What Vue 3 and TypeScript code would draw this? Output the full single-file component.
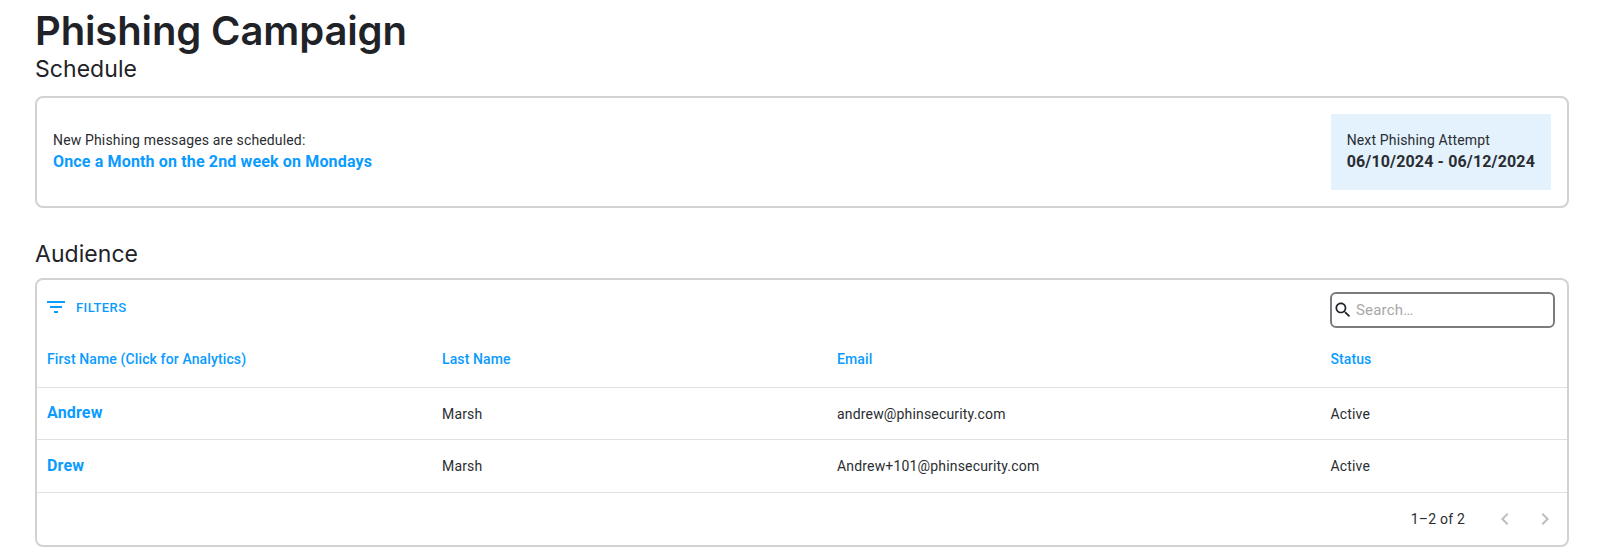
<script setup lang="ts">
interface Row { first: string; last: string; email: string; status: string }
const rows: Row[] = [
  { first: 'Andrew', last: 'Marsh', email: 'andrew@phinsecurity.com', status: 'Active' },
  { first: 'Drew', last: 'Marsh', email: 'Andrew+101@phinsecurity.com', status: 'Active' },
]
</script>

<template>
  <div class="page">
    <h1 class="title">Phishing Campaign</h1>
    <h2 class="subtitle">Schedule</h2>
    <section class="card schedule">
      <div class="lift">
        <div class="body">New Phishing messages are scheduled:</div>
        <div class="strong blue">Once a Month on the 2nd week on Mondays</div>
      </div>
      <div class="next">
        <div class="body">Next Phishing Attempt</div>
        <div class="strong">06/10/2024 - 06/12/2024</div>
      </div>
    </section>
    <h2 class="subtitle audience">Audience</h2>
    <section class="card grid">
      <div class="toolbar">
        <div class="filters">
          <svg width="18" height="18" viewBox="3 3 18 18" fill="#0a9bff"><path d="M10 18h4v-2h-4v2zM3 6v2h18V6H3zm3 7h12v-2H6v2z"/></svg>
          <span>FILTERS</span>
        </div>
        <div class="search">
          <svg width="20" height="20" viewBox="0 0 24 24" fill="#1f2328"><path d="M15.5 14h-.79l-.28-.27C15.41 12.59 16 11.11 16 9.5 16 5.91 13.09 3 9.5 3S3 5.91 3 9.5 5.91 16 9.5 16c1.61 0 3.09-.59 4.23-1.57l.27.28v.79l5 4.99L20.49 19l-4.99-5zm-6 0C7.01 14 5 11.99 5 9.5S7.01 5 9.5 5 14 7.01 14 9.5 11.99 14 9.5 14z"/></svg>
          <span>Search…</span>
        </div>
      </div>
      <div class="row head">
        <div>First Name (Click for Analytics)</div>
        <div>Last Name</div>
        <div>Email</div>
        <div>Status</div>
      </div>
      <div v-for="r in rows" :key="r.email" class="row data">
        <div class="name">{{ r.first }}</div>
        <div>{{ r.last }}</div>
        <div>{{ r.email }}</div>
        <div>{{ r.status }}</div>
      </div>
      <div class="footer">
        <span>1–2 of 2</span>
        <div class="pager">
          <svg width="24" height="24" viewBox="0 0 24 24" fill="#bdbdbd"><path d="M15.41 7.41 14 6l-6 6 6 6 1.41-1.41L10.83 12z"/></svg>
          <svg width="24" height="24" viewBox="0 0 24 24" fill="#bdbdbd"><path d="M10 6 8.59 7.41 13.17 12l-4.58 4.59L10 18l6-6z"/></svg>
        </div>
      </div>
    </section>
  </div>
</template>

<style>
html, body { background: #fff; margin: 0; }
</style>

<style scoped>
.page {
  padding: 7px 53px 0 35px;
  font-family: Roboto, "Liberation Sans", sans-serif;
  color: #2a2d31;
}
.title {
  margin: 0;
  font: 600 40px/48px Inter, sans-serif;
  letter-spacing: -0.13px;
  color: #1f2328;
}
.subtitle {
  margin: 0;
  font: 400 23px/28px Inter, sans-serif;
  letter-spacing: 0.05px;
  color: #1f2328;
}
.card {
  box-sizing: border-box;
  border: 2px solid #d2d2d2;
  border-radius: 8px;
  background: #fff;
}
.schedule {
  margin-top: 13px;
  height: 112px;
  display: flex;
  align-items: center;
  justify-content: space-between;
  padding: 0 16px;
}
.lift { padding-bottom: 2px; }
.body { font-size: 14px; line-height: 21px; letter-spacing: 0.15px; }
.strong { font-size: 16px; font-weight: 700; line-height: 22px; letter-spacing: 0.15px; }
.blue { color: #0a9bff; }
.next {
  background: #e3f2fd;
  padding: 0 16px 2px;
  height: 76px;
  box-sizing: border-box;
  display: flex;
  flex-direction: column;
  justify-content: center;
}
.audience { margin-top: 32px; margin-bottom: 10px; }
.grid { height: 269px; display: flex; flex-direction: column; font-size: 14px; }
.toolbar {
  height: 60px;
  display: flex;
  align-items: center;
  justify-content: space-between;
  padding: 0 12px 0 10px;
  flex: none;
}
.filters {
  display: flex;
  align-items: center;
  gap: 11px;
  padding-bottom: 6px;
  color: #0a9bff;
  font-size: 13px;
  font-weight: 500;
  letter-spacing: 0.4px;
}
.search {
  box-sizing: border-box;
  width: 225px;
  height: 36px;
  border: 2px solid #7c7c7c;
  border-radius: 6px;
  display: flex;
  align-items: center;
  gap: 3px;
  padding: 0 1px;
  color: #a8a8a8;
  font-size: 15px;
  letter-spacing: 0.2px;
}
.row {
  display: grid;
  grid-template-columns: 395px 395px 493.4px 1fr;
  align-items: center;
  padding: 0 10px;
  flex: none;
  font-size: 14px;
  letter-spacing: 0.17px;
}
.head {
  box-sizing: border-box;
  height: 48px;
  padding-bottom: 9px;
  color: #0a9bff;
  font-weight: 500;
  letter-spacing: 0.12px;
  border-bottom: 1px solid #e0e0e0;
}
.data { height: 52px; border-bottom: 1px solid #e0e0e0; box-sizing: border-box; }
.data + .data { height: 53px; }
.name { color: #0a9bff; font-size: 16px; font-weight: 700; padding-bottom: 2px; }
.footer {
  flex: 1;
  display: flex;
  align-items: center;
  justify-content: flex-end;
  gap: 28px;
  padding-right: 10px;
  font-size: 14px;
  letter-spacing: 0.2px;
}
.pager { display: flex; gap: 16px; }
</style>
